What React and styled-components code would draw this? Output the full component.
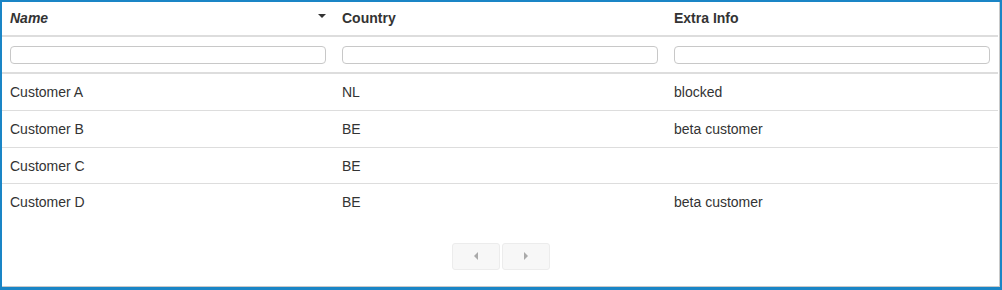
import React from "react";
import styled, { createGlobalStyle } from "styled-components";

const Global = createGlobalStyle`
  html, body { margin: 0; padding: 0; background: #fff; }
  body { font-family: "Liberation Sans", Arial, sans-serif; color: #333; }
  * { box-sizing: border-box; }
`;

const Frame = styled.div`
  width: 1002px;
  height: 290px;
  border: 2px solid #1a85c6;
  border-bottom-width: 3px;
  background: #fff;
`;

const Inner = styled.div`
  height: 100%;
  border-right: 1px solid #c9c9c9;
  border-bottom: 1px solid #c9c9c9;
  display: flex;
  flex-direction: column;
`;

const Table = styled.table`
  width: 996px;
  border-collapse: collapse;
  table-layout: fixed;
  font-size: 14px;
  line-height: 20px;
`;

const HeadCell = styled.th`
  position: relative;
  text-align: left;
  font-weight: bold;
  font-style: ${(p) => (p.$sorted ? "italic" : "normal")};
  padding: 6px 8px 7px;
  border-bottom: 2px solid #ddd;
  vertical-align: bottom;
`;

const Caret = styled.span`
  position: absolute;
  right: 8px;
  top: 12px;
  width: 0;
  height: 0;
  border-left: 4px solid transparent;
  border-right: 4px solid transparent;
  border-top: 4px solid #333;
`;

const FilterCell = styled.td`
  padding: 9px 8px 8px;
  border-bottom: 2px solid #ddd;
`;

const FilterInput = styled.input`
  display: block;
  width: 100%;
  height: 18px;
  border: 1px solid #c8c8c8;
  border-radius: 4px;
  padding: 0 4px;
  font-size: 12px;
  background: #fff;
  outline: none;
`;

const Cell = styled.td`
  padding: ${(p) => (p.$first ? "8px" : "8px 8px 7.5px")};
  border-top: ${(p) => (p.$first ? "none" : "1px solid #ddd")};
  vertical-align: top;
`;

const Pager = styled.div`
  display: flex;
  justify-content: center;
  gap: 2px;
  margin-top: 23px;
`;

const PagerButton = styled.button`
  width: 48px;
  height: 27px;
  border: 1px solid #ececec;
  border-radius: 3px;
  background: #f7f7f7;
  display: flex;
  align-items: center;
  justify-content: center;
  padding: 0;
  cursor: default;
`;

const Arrow = styled.span`
  width: 0;
  height: 0;
  border-top: 4px solid transparent;
  border-bottom: 4px solid transparent;
  ${(p) =>
    p.$dir === "left"
      ? "border-right: 4px solid #aaa;"
      : "border-left: 4px solid #aaa;"}
`;

const rows = [
  ["Customer A", "NL", "blocked"],
  ["Customer B", "BE", "beta customer"],
  ["Customer C", "BE", ""],
  ["Customer D", "BE", "beta customer"],
];

export default function App() {
  return (
    <>
      <Global />
      <Frame>
        <Inner>
          <Table>
            <thead>
              <tr>
                <HeadCell $sorted>
                  Name
                  <Caret />
                </HeadCell>
                <HeadCell>Country</HeadCell>
                <HeadCell>Extra Info</HeadCell>
              </tr>
              <tr>
                <FilterCell><FilterInput /></FilterCell>
                <FilterCell><FilterInput /></FilterCell>
                <FilterCell><FilterInput /></FilterCell>
              </tr>
            </thead>
            <tbody>
              {rows.map((r, i) => (
                <tr key={i}>
                  {r.map((c, j) => (
                    <Cell key={j} $first={i === 0}>{c}</Cell>
                  ))}
                </tr>
              ))}
            </tbody>
          </Table>
          <Pager>
            <PagerButton aria-label="previous"><Arrow $dir="left" /></PagerButton>
            <PagerButton aria-label="next"><Arrow $dir="right" /></PagerButton>
          </Pager>
        </Inner>
      </Frame>
    </>
  );
}
